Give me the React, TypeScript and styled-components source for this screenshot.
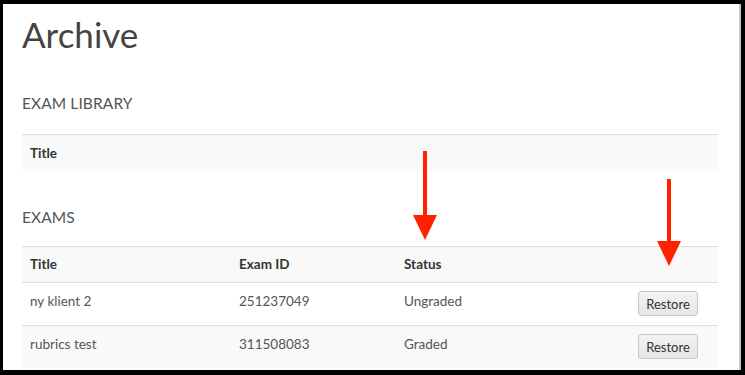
import styled, { createGlobalStyle } from 'styled-components';

const GlobalStyle = createGlobalStyle`
  * {
    box-sizing: border-box;
  }

  body {
    margin: 0;
    background: #000;
    font-family: Lato, 'Noto Sans', sans-serif;
  }
`;

type Exam = {
  title: string;
  id: string;
  status: string;
};

const exams: Exam[] = [
  { title: 'ny klient 2', id: '251237049', status: 'Ungraded' },
  { title: 'rubrics test', id: '311508083', status: 'Graded' },
];

const Arrow = ({ height }: { height: number }) => (
  <svg width='26' height={height} viewBox={`0 0 26 ${height}`}>
    <rect x='11' y='0' width='4' height={height - 22} fill='#ff2200' />
    <polygon points={`1,${height - 25} 25,${height - 25} 13,${height}`} fill='#ff2200' />
  </svg>
);

const App = () => {
  return (
    <Frame>
      <GlobalStyle />
      <Panel>
        <PageTitle>Archive</PageTitle>

        <SectionTitle>EXAM LIBRARY</SectionTitle>
        <Table>
          <thead>
            <HeadRow>
              <HeadCell>Title</HeadCell>
            </HeadRow>
          </thead>
        </Table>

        <SectionTitle $gap={36}>EXAMS</SectionTitle>
        <Table $lined>
          <colgroup>
            <col style={{ width: 209 }} />
            <col style={{ width: 165 }} />
            <col />
            <col style={{ width: 120 }} />
          </colgroup>
          <thead>
            <HeadRow>
              <HeadCell>Title</HeadCell>
              <HeadCell>Exam ID</HeadCell>
              <HeadCell>Status</HeadCell>
              <HeadCell />
            </HeadRow>
          </thead>
          <tbody>
            {exams.map((exam, i) => (
              <BodyRow key={exam.id} $striped={i % 2 === 1}>
                <Cell>{exam.title}</Cell>
                <Cell>{exam.id}</Cell>
                <Cell>{exam.status}</Cell>
                <ActionCell>
                  <RestoreButton>Restore</RestoreButton>
                </ActionCell>
              </BodyRow>
            ))}
          </tbody>
        </Table>

        <ArrowMark $left={412} $top={151}>
          <Arrow height={89} />
        </ArrowMark>
        <ArrowMark $left={656} $top={179}>
          <Arrow height={87} />
        </ArrowMark>
      </Panel>
    </Frame>
  );
};

export default App;

const Frame = styled.div`
  width: 745px;
  height: 375px;
  padding: 4px 4px 5px 3px;
  background: #000;
  overflow: hidden;
`;

const Panel = styled.div`
  position: relative;
  height: 100%;
  padding: 0 21px 0 19px;
  background: #fff;
  border-right: 2px solid #c8c8c8;
  overflow: hidden;
`;

const PageTitle = styled.h1`
  margin: 0;
  padding-top: 6px;
  font-size: 35px;
  font-weight: 400;
  line-height: 48px;
  color: #444;
`;

const SectionTitle = styled.h2<{ $gap?: number }>`
  margin: ${({ $gap }) => $gap ?? 35}px 0 0;
  font-size: 15.5px;
  font-weight: 400;
  line-height: 20px;
  color: #555;
  letter-spacing: 0.1px;
`;

const Table = styled.table<{ $lined?: boolean }>`
  width: 100%;
  margin-top: ${({ $lined }) => ($lined ? 19 : 21)}px;
  border-collapse: collapse;
  table-layout: fixed;
  font-size: 13.5px;
`;

const HeadRow = styled.tr`
  background: #f9f9f9;
  border-top: 1px solid #ddd;
`;

const HeadCell = styled.th`
  height: 36px;
  padding: 0 8px;
  text-align: left;
  font-weight: 700;
  color: #333;
`;

const BodyRow = styled.tr<{ $striped: boolean }>`
  background: ${({ $striped }) => ($striped ? '#f9f9f9' : '#fff')};
  border-top: 1px solid #ddd;
`;

const Cell = styled.td`
  height: 43px;
  padding: 0 8px 6px;
  color: #555;
  vertical-align: middle;
`;

const ActionCell = styled.td`
  height: 43px;
  padding: 0 20px 0 0;
  text-align: right;
  vertical-align: middle;
`;

const RestoreButton = styled.button`
  width: 60px;
  height: 25px;
  padding: 0;
  font-family: Lato, 'Noto Sans', sans-serif;
  font-size: 13px;
  color: #333;
  background: linear-gradient(#f2f2f2, #e6e6e6);
  border: 1px solid #c6c6c6;
  border-radius: 3px;
`;

const ArrowMark = styled.div<{ $left: number; $top: number }>`
  position: absolute;
  left: ${({ $left }) => $left - 3}px;
  top: ${({ $top }) => $top - 4}px;
  line-height: 0;
`;
